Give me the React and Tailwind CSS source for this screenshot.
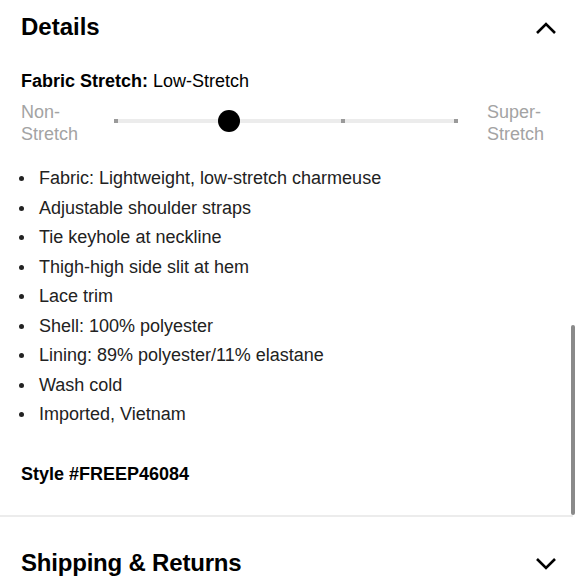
import React from "react";

const items = [
  "Fabric: Lightweight, low-stretch charmeuse",
  "Adjustable shoulder straps",
  "Tie keyhole at neckline",
  "Thigh-high side slit at hem",
  "Lace trim",
  "Shell: 100% polyester",
  "Lining: 89% polyester/11% elastane",
  "Wash cold",
  "Imported, Vietnam",
];

function Chevron({ up }) {
  return (
    <svg width="22" height="14" viewBox="0 0 22 14" fill="none">
      <path
        d={up ? "M2 12 L11 3 L20 12" : "M2 2 L11 11 L20 2"}
        stroke="#000"
        strokeWidth="2.6"
        strokeLinecap="butt"
        strokeLinejoin="miter"
      />
    </svg>
  );
}

export default function App() {
  return (
    <div
      className="relative w-[580px] h-[580px] overflow-hidden bg-white text-[#1a1a1a]"
      style={{ fontFamily: '"Liberation Sans", Arial, sans-serif' }}
    >
      <div className="pl-[21px] pr-[22px]">
        <div className="flex items-center justify-between pt-[1px] h-[53px]">
          <h2 className="text-[24px] font-bold leading-none text-black">Details</h2>
          <div className="mr-[1px] mt-[1px]"><Chevron up /></div>
        </div>
        <div className="mt-[17px] text-[18px] leading-[22px] text-black">
          <span className="font-bold">Fabric Stretch:</span> Low-Stretch
        </div>
        <div className="mt-[9px] flex items-center">
          <div className="w-[93px] text-[18px] leading-[22px] text-[#a3a3a3]">
            Non-
            <br />
            Stretch
          </div>
          <div className="relative w-[344px] h-[4px] bg-[#ececec] mb-[5px]">
            <div className="absolute left-0 top-0 w-[4px] h-[4px] bg-[#9a9a9a]" />
            <div className="absolute left-[113px] top-0 w-[4px] h-[4px] bg-[#9a9a9a]" />
            <div className="absolute left-[227px] top-0 w-[4px] h-[4px] bg-[#9a9a9a]" />
            <div className="absolute right-0 top-0 w-[4px] h-[4px] bg-[#9a9a9a]" />
            <div className="absolute left-[104px] top-[-9px] w-[22px] h-[22px] rounded-full bg-black" />
          </div>
          <div className="ml-[29px] text-[18px] leading-[22px] text-[#a3a3a3]">
            Super-
            <br />
            Stretch
          </div>
        </div>
        <ul className="mt-[19px] flex flex-col">
          {items.map((t) => (
            <li key={t} className="flex items-center h-[29.5px] text-[18px] text-[#222]">
              <span className="w-[5px] h-[5px] rounded-full bg-[#222] ml-[-2px] mr-[15px]" />
              {t}
            </li>
          ))}
        </ul>
        <div className="mt-[33px] text-[18px] font-bold text-black leading-[22px]">Style #FREEP46084</div>
      </div>
      <div className="mt-[30px] h-[2px] w-[573px] bg-[#ececec]" />
      <div className="pl-[21px] pr-[22px] flex items-center justify-between mt-[34px]">
        <h2 className="text-[24px] font-bold leading-none text-black tracking-[-0.2px]">Shipping &amp; Returns</h2>
        <div className="mt-[3px] mr-[1px]"><Chevron /></div>
      </div>
      <div className="absolute right-[5px] top-[325px] w-[4px] h-[190px] rounded-full bg-[#8a8a8a]" />
    </div>
  );
}
